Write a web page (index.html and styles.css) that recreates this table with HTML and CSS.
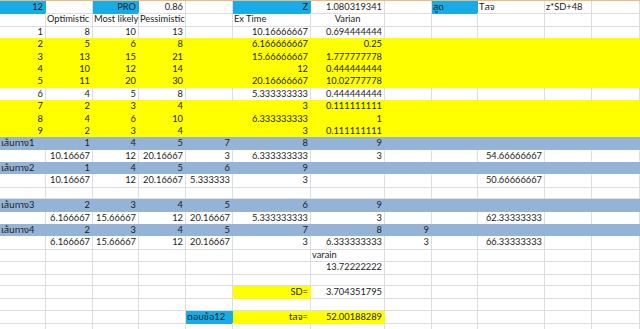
FILE: index.html
```html
<!DOCTYPE html>
<html>
<head>
<meta charset="utf-8">
<link rel="stylesheet" href="styles.css">
</head>
<body>
<div class="topline"></div>
<div class="sheet">
  <div class="row">
    <div class="c b">12</div><div class="c"></div><div class="c b">PRO</div><div class="c">0.86</div><div class="c"></div><div class="c b">Z</div><div class="c">1.080319341</div><div class="c"></div><div class="c b t">สูด</div><div class="c t">Tสจ</div><div class="c t">z*SD+48</div><div class="c"></div>
  </div>
  <div class="row">
    <div class="c"></div><div class="c t">Optimistic</div><div class="c t">Most likely</div><div class="c t">Pessimistic</div><div class="c"></div><div class="c t">Ex Time</div><div class="c m">Varian</div><div class="c"></div><div class="c"></div><div class="c"></div><div class="c"></div><div class="c"></div>
  </div>
  <div class="row">
    <div class="c">1</div><div class="c">8</div><div class="c">10</div><div class="c">13</div><div class="c"></div><div class="c">10.16666667</div><div class="c">0.694444444</div><div class="c"></div><div class="c"></div><div class="c"></div><div class="c"></div><div class="c"></div>
  </div>
  <div class="row fill-y">
    <div class="c">2</div><div class="c">5</div><div class="c">6</div><div class="c">8</div><div class="c"></div><div class="c">6.166666667</div><div class="c">0.25</div><div class="c"></div><div class="c"></div><div class="c"></div><div class="c"></div><div class="c"></div>
  </div>
  <div class="row fill-y">
    <div class="c">3</div><div class="c">13</div><div class="c">15</div><div class="c">21</div><div class="c"></div><div class="c">15.66666667</div><div class="c">1.777777778</div><div class="c"></div><div class="c"></div><div class="c"></div><div class="c"></div><div class="c"></div>
  </div>
  <div class="row fill-y">
    <div class="c">4</div><div class="c">10</div><div class="c">12</div><div class="c">14</div><div class="c"></div><div class="c">12</div><div class="c">0.444444444</div><div class="c"></div><div class="c"></div><div class="c"></div><div class="c"></div><div class="c"></div>
  </div>
  <div class="row fill-y">
    <div class="c">5</div><div class="c">11</div><div class="c">20</div><div class="c">30</div><div class="c"></div><div class="c">20.16666667</div><div class="c">10.02777778</div><div class="c"></div><div class="c"></div><div class="c"></div><div class="c"></div><div class="c"></div>
  </div>
  <div class="row">
    <div class="c">6</div><div class="c">4</div><div class="c">5</div><div class="c">8</div><div class="c"></div><div class="c">5.333333333</div><div class="c">0.444444444</div><div class="c"></div><div class="c"></div><div class="c"></div><div class="c"></div><div class="c"></div>
  </div>
  <div class="row fill-y">
    <div class="c">7</div><div class="c">2</div><div class="c">3</div><div class="c">4</div><div class="c"></div><div class="c">3</div><div class="c">0.111111111</div><div class="c"></div><div class="c"></div><div class="c"></div><div class="c"></div><div class="c"></div>
  </div>
  <div class="row fill-y">
    <div class="c">8</div><div class="c">4</div><div class="c">6</div><div class="c">10</div><div class="c"></div><div class="c">6.333333333</div><div class="c">1</div><div class="c"></div><div class="c"></div><div class="c"></div><div class="c"></div><div class="c"></div>
  </div>
  <div class="row fill-y">
    <div class="c">9</div><div class="c">2</div><div class="c">3</div><div class="c">4</div><div class="c"></div><div class="c">3</div><div class="c">0.111111111</div><div class="c"></div><div class="c"></div><div class="c"></div><div class="c"></div><div class="c"></div>
  </div>
  <div class="row fill-g">
    <div class="c t">เส้นทาง1</div><div class="c">1</div><div class="c">4</div><div class="c">5</div><div class="c">7</div><div class="c">8</div><div class="c">9</div><div class="c"></div><div class="c"></div><div class="c"></div><div class="c"></div><div class="c"></div>
  </div>
  <div class="row">
    <div class="c"></div><div class="c">10.16667</div><div class="c">12</div><div class="c">20.16667</div><div class="c">3</div><div class="c">6.333333333</div><div class="c">3</div><div class="c"></div><div class="c"></div><div class="c">54.66666667</div><div class="c"></div><div class="c"></div>
  </div>
  <div class="row fill-g">
    <div class="c t">เส้นทาง2</div><div class="c">1</div><div class="c">4</div><div class="c">5</div><div class="c">6</div><div class="c">9</div><div class="c"></div><div class="c"></div><div class="c"></div><div class="c"></div><div class="c"></div><div class="c"></div>
  </div>
  <div class="row">
    <div class="c"></div><div class="c">10.16667</div><div class="c">12</div><div class="c">20.16667</div><div class="c">5.333333</div><div class="c">3</div><div class="c"></div><div class="c"></div><div class="c"></div><div class="c">50.66666667</div><div class="c"></div><div class="c"></div>
  </div>
  <div class="row">
    <div class="c"></div><div class="c"></div><div class="c"></div><div class="c"></div><div class="c"></div><div class="c"></div><div class="c"></div><div class="c"></div><div class="c"></div><div class="c"></div><div class="c"></div><div class="c"></div>
  </div>
  <div class="row fill-g">
    <div class="c t">เส้นทาง3</div><div class="c">2</div><div class="c">3</div><div class="c">4</div><div class="c">5</div><div class="c">6</div><div class="c">9</div><div class="c"></div><div class="c"></div><div class="c"></div><div class="c"></div><div class="c"></div>
  </div>
  <div class="row">
    <div class="c"></div><div class="c">6.166667</div><div class="c">15.66667</div><div class="c">12</div><div class="c">20.16667</div><div class="c">5.333333333</div><div class="c">3</div><div class="c"></div><div class="c"></div><div class="c">62.33333333</div><div class="c"></div><div class="c"></div>
  </div>
  <div class="row fill-g">
    <div class="c t">เส้นทาง4</div><div class="c">2</div><div class="c">3</div><div class="c">4</div><div class="c">5</div><div class="c">7</div><div class="c">8</div><div class="c">9</div><div class="c"></div><div class="c"></div><div class="c"></div><div class="c"></div>
  </div>
  <div class="row">
    <div class="c"></div><div class="c">6.166667</div><div class="c">15.66667</div><div class="c">12</div><div class="c">20.16667</div><div class="c">3</div><div class="c">6.333333333</div><div class="c">3</div><div class="c"></div><div class="c">66.33333333</div><div class="c"></div><div class="c"></div>
  </div>
  <div class="row">
    <div class="c"></div><div class="c"></div><div class="c"></div><div class="c"></div><div class="c"></div><div class="c"></div><div class="c t">varain</div><div class="c"></div><div class="c"></div><div class="c"></div><div class="c"></div><div class="c"></div>
  </div>
  <div class="row">
    <div class="c"></div><div class="c"></div><div class="c"></div><div class="c"></div><div class="c"></div><div class="c"></div><div class="c">13.72222222</div><div class="c"></div><div class="c"></div><div class="c"></div><div class="c"></div><div class="c"></div>
  </div>
  <div class="row">
    <div class="c"></div><div class="c"></div><div class="c"></div><div class="c"></div><div class="c"></div><div class="c"></div><div class="c"></div><div class="c"></div><div class="c"></div><div class="c"></div><div class="c"></div><div class="c"></div>
  </div>
  <div class="row">
    <div class="c"></div><div class="c"></div><div class="c"></div><div class="c"></div><div class="c"></div><div class="c y">SD=</div><div class="c">3.704351795</div><div class="c"></div><div class="c"></div><div class="c"></div><div class="c"></div><div class="c"></div>
  </div>
  <div class="row">
    <div class="c"></div><div class="c"></div><div class="c"></div><div class="c"></div><div class="c"></div><div class="c"></div><div class="c"></div><div class="c"></div><div class="c"></div><div class="c"></div><div class="c"></div><div class="c"></div>
  </div>
  <div class="row">
    <div class="c"></div><div class="c"></div><div class="c"></div><div class="c"></div><div class="c b t">ตอบข้อ12</div><div class="c y">tสจ=</div><div class="c y">52.00188289</div><div class="c"></div><div class="c"></div><div class="c"></div><div class="c"></div><div class="c"></div>
  </div>
  <div class="row">
    <div class="c"></div><div class="c"></div><div class="c"></div><div class="c"></div><div class="c"></div><div class="c"></div><div class="c"></div><div class="c"></div><div class="c"></div><div class="c"></div><div class="c"></div><div class="c"></div>
  </div>
</div>
</body>
</html>
```

FILE: styles.css
```css
html, body {
  margin: 0;
  padding: 0;
  background: #ffffff;
  overflow: hidden;
}

body {
  width: 640px;
  height: 329px;
  font-family: Lato, "Noto Sans Thai", "Noto Sans", sans-serif;
  font-size: 9.3px;
  color: #1c1c1c;
}

.topline {
  height: 1px;
  background: #f2b978;
}

.sheet {
  display: flex;
  flex-direction: column;
}

.row {
  display: grid;
  grid-template-columns: 46px 47px 46px 47px 47px 78px 74px 47px 46px 67px 47px 48px;
  height: 12.4px;
  flex: none;
}

.c {
  box-sizing: border-box;
  border-right: 1px solid #dcdedf;
  border-bottom: 1px solid #dcdedf;
  text-align: right;
  padding: 0 2px 0 2px;
  line-height: 12.4px;
  white-space: nowrap;
  overflow: visible;
}

.c.t {
  text-align: left;
  padding-left: 1px;
}

.c.m {
  text-align: center;
}

.c.b {
  background: #17ace8;
  border-color: #17ace8;
}

.c.y {
  background: #ffff00;
  border-color: #ffff00;
}

.fill-y {
  background: #ffff00;
}

.fill-g {
  background: #95b3d7;
}

.fill-y .c,
.fill-g .c {
  border-color: transparent;
}
```
